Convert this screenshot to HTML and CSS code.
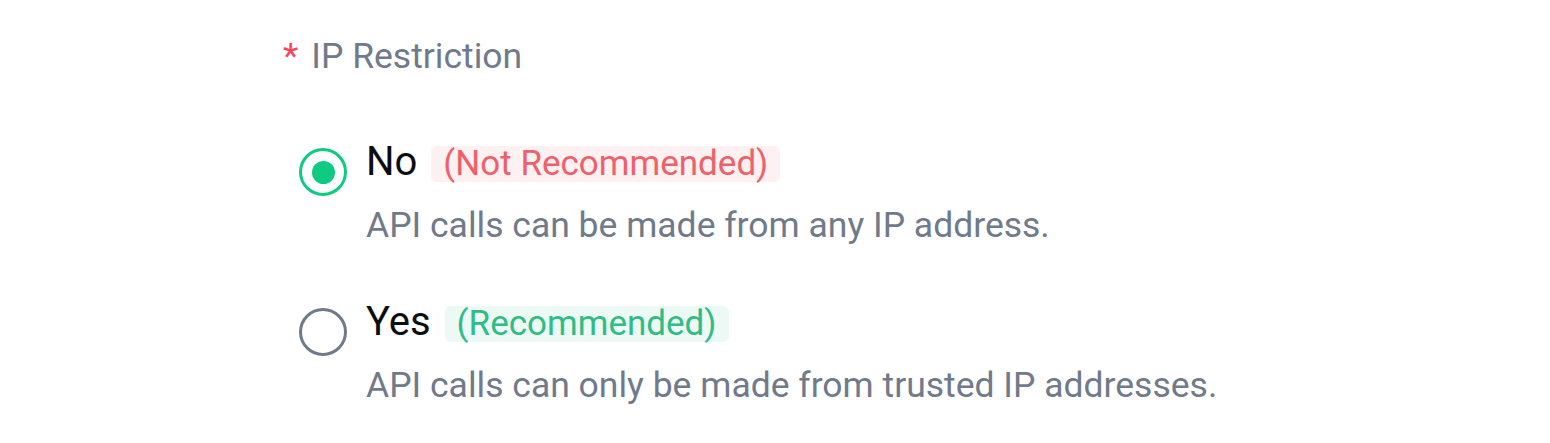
FILE: index.html
```html
<!DOCTYPE html>
<html lang="en">
<head>
    <meta charset="UTF-8">
    <meta name="viewport" content="width=device-width, initial-scale=1.0">
    <title>IP Restriction</title>
    <link rel="stylesheet" href="styles.css">
</head>
<body>
    <div class="field">
        <div class="field-title"><span class="required">*</span>IP Restriction</div>

        <div class="options">
            <label class="option">
                <span class="radio checked"></span>
                <span class="option-body">
                    <span class="option-label">No <span class="tag tag-red">(Not Recommended)</span></span>
                    <span class="option-desc">API calls can be made from any IP address.</span>
                </span>
            </label>

            <label class="option">
                <span class="radio"></span>
                <span class="option-body">
                    <span class="option-label">Yes <span class="tag tag-green">(Recommended)</span></span>
                    <span class="option-desc">API calls can only be made from trusted IP addresses.</span>
                </span>
            </label>
        </div>
    </div>
</body>
</html>
```

FILE: styles.css
```css
body {
    margin: 0;
    background-color: #fff;
    font-family: 'Roboto', 'Liberation Sans', sans-serif;
}

.field {
    padding: 32px 0 0 283px;
}

.field-title {
    font-size: 35.5px;
    line-height: 48px;
    color: #707a8a;
}

.required {
    color: #f6465d;
    margin-right: 13px;
}

.options {
    display: flex;
    flex-direction: column;
    gap: 51px;
    padding: 58px 0 0 16px;
}

.option {
    display: flex;
    gap: 19px;
    cursor: pointer;
}

.radio {
    flex: none;
    width: 48px;
    height: 48px;
    margin-top: 10px;
    border: 3px solid #707a8a;
    border-radius: 50%;
    box-sizing: border-box;
    display: flex;
    align-items: center;
    justify-content: center;
}

.radio.checked {
    border-color: #0ecb81;
}

.radio.checked::after {
    content: '';
    width: 23px;
    height: 23px;
    border-radius: 50%;
    background-color: #0ecb81;
}

.option-body {
    display: flex;
    flex-direction: column;
    gap: 17px;
}

.option-label {
    display: flex;
    align-items: center;
    font-size: 40px;
    line-height: 48px;
    color: #0b0e11;
}

.tag {
    margin: 4px 0 0 14px;
    padding: 0 12px;
    height: 36px;
    line-height: 36px;
    border-radius: 6px;
    font-size: 35px;
}

.tag-red {
    color: #f0606a;
    background-color: #fef1f2;
}

.tag-green {
    color: #2ebd85;
    background-color: #edf9f4;
}

.option-desc {
    font-size: 35.5px;
    line-height: 44px;
    color: #707a8a;
}
```
